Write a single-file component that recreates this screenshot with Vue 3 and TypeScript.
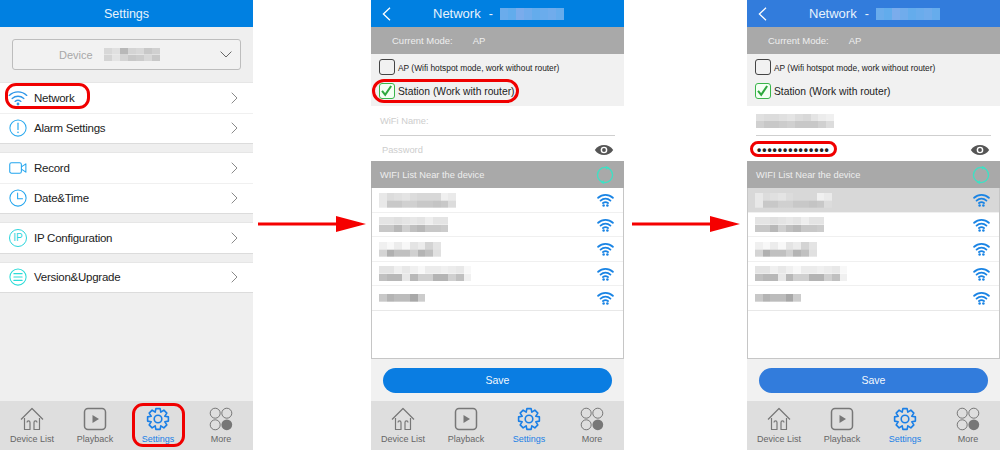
<script setup lang="ts">
// Three phone screens in a row: settings menu, then the network form before and after filling in.
type Rows = string[][]

const menu = [
  [
    { name: 'Network', icon: 'wifi', c: '#2f97e8' },
    { name: 'Alarm Settings', icon: 'alarm', c: '#2aa9ee' },
  ],
  [
    { name: 'Record', icon: 'record', c: '#22a5ee' },
    { name: 'Date&Time', icon: 'clock', c: '#22a5ee' },
  ],
  [{ name: 'IP Configuration', icon: 'ip', c: '#2bd5dc' }],
  [{ name: 'Version&Upgrade', icon: 'list', c: '#2bdcd8' }],
]

const tabs = [
  { name: 'Device List', icon: 'home' },
  { name: 'Playback', icon: 'play' },
  { name: 'Settings', icon: 'gear' },
  { name: 'More', icon: 'more' },
]

const deviceBlur: Rows = [
  ['d8', 'e0', 'b8', 'd4', 'd8', 'c8', 'd0'],
  ['d4', 'e4', 'd4', 'c8', 'cc', 'd8', 'c8'],
]
const nameBlur: Rows = [
  ['e0', 'dc', 'dc', 'e0', 'e4', 'dc', 'd8', 'e4', 'ec', 'f0'],
  ['d0', 'c8', 'c8', 'cc', 'd0', 'c8', 'c8', 'c8', 'd0', 'dc'],
]
const titleBlur: Rows = [['6a', '62', '7a', '70', '64', '6a', '70', '66']]

const wifiRows: Rows[] = [
  [
    ['e8', 'dc', 'e0', 'e4', 'dc', 'd8', 'd8', 'd8', 'f0', 'ea'],
    ['e8', 'c8', 'c8', 'd0', 'd0', 'c8', 'c8', 'c4', 'c8', 'dc'],
  ],
  [
    ['e4', 'e4', 'e0', 'e4', 'e8', 'e4', 'ee', 'e4', 'e4'],
    ['c8', 'c8', 'b8', 'd0', 'c0', 'b8', 'c8', 'c8', 'cc'],
  ],
  [
    ['f0', 'f8', 'ec', 'f8', 'e4', 'ec', 'd4', 'e4'],
    ['d4', 'b0', 'c0', 'c0', 'd0', 'b4', 'c0', 'e0'],
  ],
  [
    ['e4', 'e4', 'f0', 'e8', 'f0', 'f8', 'ec', 'ec', 'f0', 'ec', 'e8', 'f8'],
    ['c0', 'b8', 'b8', 'e8', 'b8', 'd0', 'd0', 'b4', 'b4', 'd0', 'c0', 'f0'],
  ],
  [['c8', 'b4', 'bc', 'bc', 'a8', 'cc']],
]

const forms = [
  { filled: false, style: 'network' },
  { filled: true, style: 'network tinted' },
]

// each pixelated block is one span, painted row by row from its data
function mosaic(rows: Rows, w: number, h: number, tint = false) {
  const layers = rows.map((row, r) => {
    const stops = row.map((c, i) => {
      const col = tint ? `#${c}acec` : `#${c}${c}${c}`
      return `${col} ${i * w}px ${(i + 1) * w}px`
    })
    return `linear-gradient(90deg, ${stops.join(', ')}) 0 ${r * h}px / 100% ${h}px no-repeat`
  })
  return {
    width: `${rows[0].length * w}px`,
    height: `${rows.length * h}px`,
    background: layers.join(', '),
  }
}

// 8-tooth gear outline
function gearPath(): string {
  const pts: string[] = []
  for (let i = 0; i < 8; i++) {
    const a = (i * Math.PI) / 4
    for (const [r, d] of [[7.4, -0.39], [10.6, -0.2], [10.6, 0.2], [7.4, 0.39]]) {
      const x = 12 + r * Math.sin(a + d)
      const y = 12 - r * Math.cos(a + d)
      pts.push(`${x.toFixed(2)} ${y.toFixed(2)}`)
    }
  }
  return `M${pts.join('L')}Z`
}
const gear = gearPath()
</script>

<template>
  <svg class="defs" width="0" height="0" aria-hidden="true">
    <symbol id="i-wifi" viewBox="0 0 24 20">
      <path d="M1.5 7.5C7.5 1.8 16.5 1.8 22.5 7.5M5 11.2C9 7.6 15 7.6 19 11.2M8.5 14.7C10.6 13 13.4 13 15.5 14.7" fill="none" stroke="currentColor" stroke-width="1.6" stroke-linecap="round" />
      <circle cx="12" cy="17.8" r="1.7" fill="currentColor" />
    </symbol>
    <symbol id="i-wifi-bold" viewBox="0 0 24 20">
      <path d="M1.5 6.8C7.5 1.2 16.5 1.2 22.5 6.8M5 10.8C9 7.2 15 7.2 19 10.8M8.5 14.4C10.6 12.8 13.4 12.8 15.5 14.4" fill="none" stroke="currentColor" stroke-width="2.6" stroke-linecap="round" />
      <circle cx="9.3" cy="18" r="1.8" fill="currentColor" />
      <circle cx="14.7" cy="18" r="1.8" fill="currentColor" />
    </symbol>
    <symbol id="i-alarm" viewBox="0 0 24 24">
      <circle cx="12" cy="12" r="10.8" fill="none" stroke="currentColor" stroke-width="1.4" />
      <path d="M12 5.5V14" stroke="currentColor" stroke-width="1.6" stroke-linecap="round" />
      <circle cx="12" cy="17.8" r="1.1" fill="currentColor" />
    </symbol>
    <symbol id="i-record" viewBox="0 0 24 24">
      <rect x="1" y="5" width="15.5" height="14" rx="2.4" fill="none" stroke="currentColor" stroke-width="1.4" />
      <path d="M16.5 10.5L22.5 6.5V17.5L16.5 13.5" fill="none" stroke="currentColor" stroke-width="1.4" stroke-linejoin="round" />
    </symbol>
    <symbol id="i-clock" viewBox="0 0 24 24">
      <circle cx="12" cy="12" r="10.8" fill="none" stroke="currentColor" stroke-width="1.4" />
      <path d="M11.5 5.5V13H18" fill="none" stroke="currentColor" stroke-width="1.4" stroke-linecap="round" />
    </symbol>
    <symbol id="i-list" viewBox="0 0 24 24">
      <circle cx="12" cy="12" r="10.8" fill="none" stroke="currentColor" stroke-width="1.4" />
      <path d="M6.5 7.5H17.5M6.5 12H17.5M6.5 16.5H17.5" stroke="currentColor" stroke-width="1.4" stroke-linecap="round" />
    </symbol>
    <symbol id="i-home" viewBox="0 0 24 24">
      <path d="M1 12.5L12 1.5L23 12.5M4.5 11V22.5H10V15.5C10 13.3 7 13.3 7 15.5M19.5 11V22.5H14V15.5C14 13.3 17 13.3 17 15.5" fill="none" stroke="currentColor" stroke-width="1.2" stroke-linejoin="round" />
    </symbol>
    <symbol id="i-play" viewBox="0 0 24 24">
      <rect x="1.5" y="1.5" width="21" height="21" rx="3.5" fill="none" stroke="currentColor" stroke-width="1.5" />
      <path d="M9.5 8L16 12L9.5 16Z" fill="currentColor" />
    </symbol>
    <symbol id="i-gear" viewBox="0 0 24 24">
      <path :d="gear" fill="none" stroke="currentColor" stroke-width="1.6" stroke-linejoin="round" />
      <circle cx="12" cy="12" r="3.8" fill="none" stroke="currentColor" stroke-width="1.6" />
    </symbol>
    <symbol id="i-more" viewBox="0 0 24 24">
      <circle cx="6.2" cy="6.2" r="5" fill="none" stroke="currentColor" stroke-width="1" />
      <circle cx="17.8" cy="6.2" r="5" fill="none" stroke="currentColor" stroke-width="1" />
      <circle cx="6.2" cy="17.8" r="5" fill="none" stroke="currentColor" stroke-width="1" />
      <circle cx="17.8" cy="17.8" r="5.4" fill="currentColor" />
    </symbol>
    <symbol id="i-eye" viewBox="0 0 24 14">
      <path d="M1 7C6 -1 18 -1 23 7C18 15 6 15 1 7Z" fill="currentColor" />
      <circle cx="12" cy="7" r="4" fill="#fff" />
      <circle cx="12" cy="7" r="2.3" fill="currentColor" />
    </symbol>
    <symbol id="i-refresh" viewBox="0 0 20 20">
      <circle cx="10" cy="10" r="8.4" fill="none" stroke="currentColor" stroke-width="1.5" />
      <path d="M11 -.2L15 2L11 4.2ZM9 15.8L5 18L9 20.2Z" fill="currentColor" />
    </symbol>
    <symbol id="i-arrow" viewBox="0 0 108 16" preserveAspectRatio="none">
      <path d="M0 6.5H78V0L108 8L78 16V9.5H0Z" fill="#f50000" />
    </symbol>
  </svg>

  <div class="stage">
    <section class="phone">
      <header class="bar">Settings</header>
      <div class="device-wrap">
        <div class="device">
          <span class="device-label">Device</span>
          <span class="blur" :style="mosaic(deviceBlur, 8, 6.5)" />
          <svg class="caret" viewBox="0 0 12 7"><path d="M.6 .6L6 6L11.4 .6" /></svg>
        </div>
      </div>
      <div v-for="(group, g) in menu" :key="g" class="group">
        <div v-for="row in group" :key="row.name" class="row">
          <span class="row-icon" :style="{ color: row.c }">
            <span v-if="row.icon === 'ip'" class="ip">IP</span>
            <svg v-else :class="'ic-' + row.icon"><use :href="'#i-' + row.icon" /></svg>
          </span>
          <span class="row-name">{{ row.name }}</span>
          <svg class="chev" viewBox="0 0 7 12"><path d="M.7 .7L6 6L.7 11.3" /></svg>
        </div>
      </div>
      <div class="spacer" />
      <nav class="tabs">
        <div v-for="t in tabs" :key="t.name" class="tab" :class="{ on: t.name === 'Settings' }">
          <svg><use :href="'#i-' + t.icon" /></svg>
          <span>{{ t.name }}</span>
        </div>
      </nav>
      <span class="mark mark-network" />
      <span class="mark mark-settings" />
    </section>

    <template v-for="(f, n) in forms" :key="n">
      <div class="arrow" :class="n === 0 ? 'arrow-a' : 'arrow-b'">
        <svg><use href="#i-arrow" /></svg>
      </div>
      <section class="phone" :class="f.style">
        <header class="bar net-bar">
          <svg class="back" viewBox="0 0 9 14"><path d="M8 .8L1.4 7L8 13.2" /></svg>
          <span class="net-title">Network</span>
          <span class="net-dash">-</span>
          <span class="blur" :style="mosaic(titleBlur, 8, 12, true)" />
        </header>
        <div class="mode"><span>Current Mode:</span><span>AP</span></div>
        <div class="options">
          <div class="opt opt-ap"><span class="box" /><span class="opt-text">AP (Wifi hotspot mode, work without router)</span></div>
          <div class="opt opt-st">
            <span class="box box-on">
              <svg viewBox="0 0 14 14"><path d="M2.2 7.4L5.6 11.6L12 2.2" /></svg>
            </span>
            <span class="opt-text">Station (Work with router)</span>
          </div>
        </div>
        <div class="fields">
          <div class="field field-name">
            <span v-if="f.filled" class="blur" :style="mosaic(nameBlur, 7.8, 7)" />
            <span v-else class="hint">WiFi Name:</span>
          </div>
          <div class="field field-pass">
            <span v-if="f.filled" class="dots">••••••••••••••</span>
            <span v-else class="hint hint-pass">Password</span>
            <svg class="eye"><use href="#i-eye" /></svg>
          </div>
        </div>
        <div class="list-head">
          <span>WIFI List Near the device</span>
          <svg class="refresh"><use href="#i-refresh" /></svg>
        </div>
        <div class="wifi-list">
          <div v-for="(rows, i) in wifiRows" :key="i" class="wifi-row" :class="{ picked: f.filled && i === 0 }">
            <span class="blur" :style="mosaic(rows, 7.7, 7.7)" />
            <svg class="wifi-ic"><use href="#i-wifi-bold" /></svg>
          </div>
        </div>
        <div class="save-wrap"><button class="save">Save</button></div>
        <nav class="tabs">
          <div v-for="t in tabs" :key="t.name" class="tab" :class="{ on: t.name === 'Settings' }">
            <svg><use :href="'#i-' + t.icon" /></svg>
            <span>{{ t.name }}</span>
          </div>
        </nav>
        <span v-if="f.filled" class="mark mark-pass" />
        <span v-else class="mark mark-station" />
      </section>
    </template>
  </div>
</template>

<style scoped>
.defs { position: absolute; }
.stage { display: flex; width: 1000px; height: 450px; background: #fff; font-family: "Liberation Sans", Arial, sans-serif; overflow: hidden; }
.phone { position: relative; flex: none; width: 253px; height: 450px; display: flex; flex-direction: column; background: #efefef; color: #222; }
.blur { display: block; flex: none; }
.bar { flex: none; height: 27px; display: flex; align-items: center; justify-content: center; background: #0080e1; color: #e8f3fc; font-size: 12.5px; }

.device-wrap { flex: none; height: 55px; padding: 12px 12px 0; box-sizing: border-box; }
.device { position: relative; height: 31px; box-sizing: border-box; border: 1px solid #bdbdbd; border-radius: 3px; display: flex; align-items: center; background: #f2f2f2; }
.device-label { margin-left: 46px; width: 45px; font-size: 11px; color: #a8a8a8; }
.caret { position: absolute; right: 8px; top: 11px; width: 12px; height: 7px; fill: none; stroke: #666; stroke-width: 1; }

.group { flex: none; background: #fff; margin-bottom: 8px; border-top: 1px solid #e6e6e6; border-bottom: 1px solid #dcdcdc; }
.row { position: relative; height: 29.5px; display: flex; align-items: center; }
.row + .row { border-top: 1px solid #f0f0f0; }
.row-icon { flex: none; width: 34px; display: flex; justify-content: center; padding-left: 2px; box-sizing: border-box; }
.row-icon svg { width: 18px; height: 18px; display: block; }
.row-icon .ic-wifi { width: 20px; height: 17px; }
.ip { width: 16px; height: 16px; border: 1.3px solid currentColor; border-radius: 50%; font-size: 10px; line-height: 16px; text-align: center; }
.row-name { flex: 1; font-size: 11.5px; letter-spacing: -.25px; color: #222; }
.chev { flex: none; width: 7px; height: 12px; margin-right: 15px; fill: none; stroke: #8a8a8a; stroke-width: 1; }
.spacer { flex: 1; }

.tabs { flex: none; height: 49px; display: grid; grid-template-columns: repeat(4, 63px); justify-content: center; background: #dedede; color: #666; }
.tab { display: flex; flex-direction: column; align-items: center; padding-top: 6px; font-size: 9px; }
.tab svg { width: 24px; height: 24px; margin-bottom: 3px; color: #777; }
.tab.on, .tab.on svg { color: #1a7fe6; }

.mark { position: absolute; box-sizing: border-box; border: 3px solid #f00000; }
.mark-network { left: 5px; top: 83px; width: 85px; height: 26px; border-radius: 11px; }
.mark-settings { left: 132px; top: 403px; width: 53px; height: 44px; border-radius: 11px; }
.mark-station { left: 1px; top: 79px; width: 147px; height: 24px; border-radius: 12px; }
.mark-pass { left: 3px; top: 141px; width: 87px; height: 16px; border-radius: 8px; }

.arrow { flex: none; display: flex; align-items: center; justify-content: center; padding-bottom: 2px; box-sizing: border-box; height: 450px; }
.arrow svg { height: 16px; width: 108px; }
.arrow-a { width: 118px; }
.arrow-b { width: 123px; }

.net-bar { justify-content: flex-start; padding-left: 11px; font-size: 12.5px; }
.back { width: 9px; height: 14px; fill: none; stroke: #fff; stroke-width: 1.3; }
.net-title { margin-left: 42px; font-size: 13px; }
.net-dash { margin: 0 7px 0 8px; }
.tinted .net-bar, .tinted .save { background: #327cdc; }
.mode { flex: none; height: 27px; display: flex; align-items: center; gap: 20px; padding-left: 21px; background: #a9a9a9; color: #eee; font-size: 9.5px; }
.options { flex: none; height: 52px; background: #f1f1f1; padding: 4px 8px 0; box-sizing: border-box; }
.opt { display: flex; align-items: center; gap: 3px; color: #222; }
.opt-text { padding-top: 2px; }
.opt-ap { height: 17px; font-size: 8.4px; }
.opt-st { height: 17px; font-size: 10.3px; margin-top: 7px; }
.box { flex: none; width: 16px; height: 16px; box-sizing: border-box; border: 1.3px solid #444; border-radius: 3px; }
.box-on { border-color: #39b54a; background: #f4fff4; display: block; }
.box-on svg { width: 13px; height: 13px; display: block; fill: none; stroke: #2ea83e; stroke-width: 2.2; }
.fields { flex: none; height: 55px; background: #fff; }
.field { display: flex; align-items: center; height: 27px; padding: 0 10px 0 9px; box-sizing: border-box; }
.field-name { margin: 0 9px; padding: 0; height: 30px; border-bottom: 1px solid #cfcfcf; }
.field-pass { height: 25px; position: relative; justify-content: space-between; padding-right: 10px; padding-top: 2px; }
.hint { font-size: 9.3px; color: #cdcdcd; }
.hint-pass { margin-left: 2px; }
.dots { font-size: 12px; letter-spacing: 1px; color: #222; margin-left: 1px; font-weight: 700; }
.eye { width: 20px; height: 12px; color: #555; }
.list-head { flex: none; height: 27px; display: flex; align-items: center; justify-content: space-between; padding: 0 10px 0 9px; background: #a9a9a9; color: #eee; font-size: 9.3px; }
.refresh { width: 18px; height: 18px; color: #3fe0c4; }
.wifi-list { flex: 1; background: #fff; border: 1px solid #c6c6c6; border-top: 0; min-height: 0; }
.wifi-row { height: 24.5px; box-sizing: border-box; display: flex; align-items: center; justify-content: space-between; padding: 1px 9px 0 7px; position: relative; border-bottom: 1px solid #f0f0f0; }
.wifi-row:last-child { border-bottom-color: #e8e8e8; }
.wifi-row.picked { background: #d8d8d8; }
.wifi-ic { width: 17px; height: 14px; color: #1a84e4; }
.save-wrap { flex: none; height: 42px; padding: 9px 12px 0; box-sizing: border-box; background: #f1f1f1; }
.save { display: block; width: 100%; height: 25px; border: 0; padding: 0 0 1px; border-radius: 13px; background: #0a7de2; color: #f2f8fd; font: 10.5px "Liberation Sans", Arial, sans-serif; }
</style>
